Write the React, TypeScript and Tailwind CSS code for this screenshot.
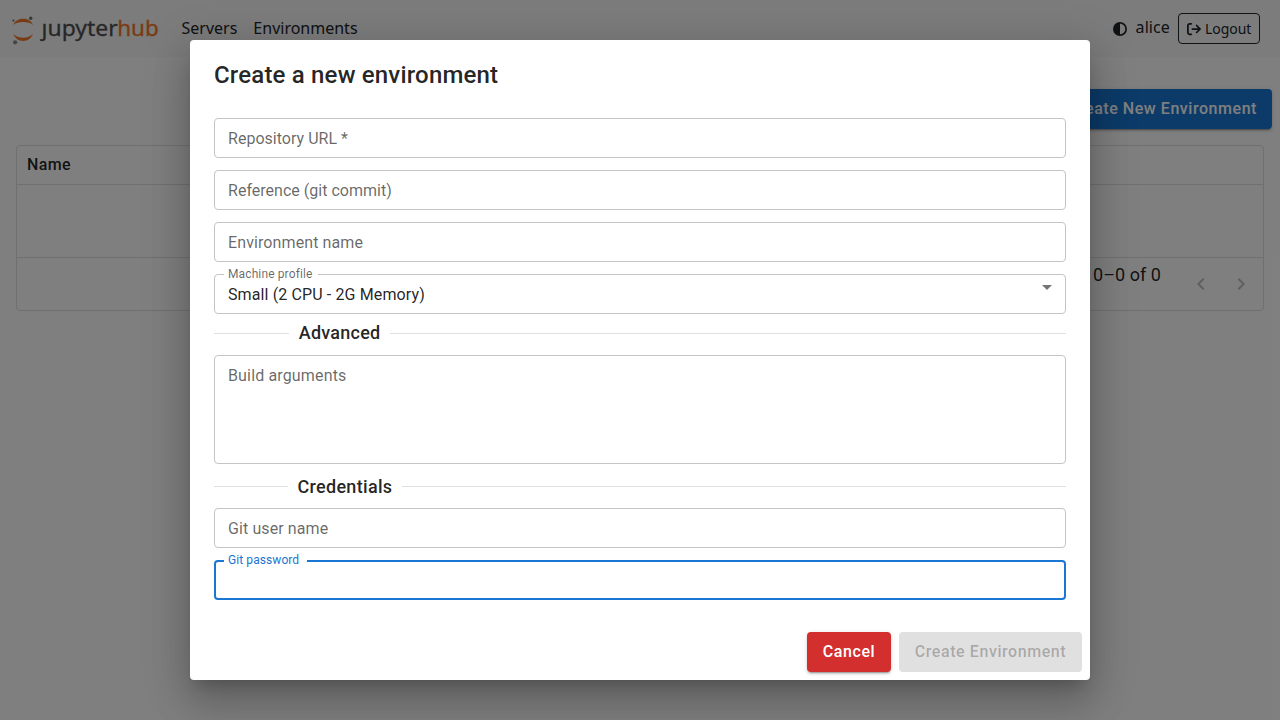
import type { ReactNode } from "react";
import { FaArrowRightFromBracket, FaCircleHalfStroke } from "react-icons/fa6";

function Logo() {
  return (
    <svg width="148" height="34" viewBox="0 0 148 34" className="block overflow-visible">
      <g transform="translate(0 .7)">
        <path d="M1.3 12.2C3.2 7.8 7 6.1 11.2 6.1s8 1.7 9.7 6.1C18.7 10.2 15.2 9.3 11.2 9.3S3.6 10.2 1.3 12.2Z" fill="#f37726" />
        <path d="M1.3 21.4c1.9 4.8 5.7 6.8 9.9 6.8s8-2 9.7-6.8c-2.2 2.4-5.7 3.6-9.7 3.6s-7.6-1.2-9.9-3.6Z" fill="#f37726" />
        <circle cx="18.7" cy="5.6" r="1.7" fill="#6f7070" />
        <circle cx="1.4" cy="7.9" r="1.1" fill="#6f7070" />
        <circle cx="3.1" cy="29.6" r="2.1" fill="#8a8a8a" />
      </g>
      <text x="29.6" y="23.9" fontSize="22.6" fontFamily="'Noto Sans', sans-serif" fill="#4e4e4e" stroke="#4e4e4e" strokeWidth="0.3" textLength="76" lengthAdjust="spacingAndGlyphs">ȷupyter</text>
      <text x="105.2" y="23.9" fontSize="22.6" fontFamily="'Noto Sans', sans-serif" fill="#f37726" stroke="#f37726" strokeWidth="0.3" textLength="41.5" lengthAdjust="spacingAndGlyphs">hub</text>
    </svg>
  );
}

function Header() {
  return (
    <header className="flex h-[57px] items-center bg-[#f8f9fa] pl-3 pr-5 font-['Noto_Sans',sans-serif] text-base text-[#212529]">
      <Logo />
      <nav className="mb-0.5 ml-[21.5px] flex gap-4">
        <a>Servers</a>
        <a>Environments</a>
      </nav>
      <div className="ml-auto flex items-center">
        <FaCircleHalfStroke className="mr-[9px] size-[14px]" />
        <span className="mb-[3px] mr-2 tracking-[0.1px]">alice</span>
        <button className="flex h-[31px] w-[82px] items-center gap-1 whitespace-nowrap rounded border border-[#212529] pl-2 text-sm tracking-[-0.05px]">
          <FaArrowRightFromBracket className="size-[14px] shrink-0" />
          Logout
        </button>
      </div>
    </header>
  );
}

function Chevron({ d }: { d: string }) {
  return (
    <svg viewBox="0 0 24 24" className="size-6 fill-black/[0.26]">
      <path d={d} />
    </svg>
  );
}

function Page() {
  return (
    <main className="flex flex-col pt-8">
      <button className="mr-2 h-10 self-end rounded bg-[#1976d2] pl-4 pr-[15px] text-base font-medium tracking-[0.55px] text-white shadow-[0_3px_1px_-2px_rgba(0,0,0,0.2),0_2px_2px_rgba(0,0,0,0.14),0_1px_5px_rgba(0,0,0,0.12)]">
        Create New Environment
      </button>
      <section className="mx-4 mt-4 flex h-[166px] flex-col rounded border border-[#e0e0e0]">
        <div className="flex h-[39px] items-center border-b border-[#e0e0e0] px-2.5 font-medium tracking-[0.4px]">Name</div>
        <div className="h-[73px] border-b border-[#e0e0e0]" />
        <div className="flex flex-1 items-center justify-end pr-2.5">
          <span className="mb-[18px] mr-7 text-lg tracking-[0.05px]">0–0 of 0</span>
          <div className="flex gap-4">
            <Chevron d="M15.41 16.59 10.83 12l4.58-4.59L14 6l-6 6 6 6z" />
            <Chevron d="M8.59 16.59 13.17 12 8.59 7.41 10 6l6 6-6 6z" />
          </div>
        </div>
      </section>
    </main>
  );
}

function Field({ label, className = "h-10 tracking-[0.1px]" }: { label: string; className?: string }) {
  return (
    <div className={`rounded border border-[#c4c4c4] px-[13px] pt-[7.5px] leading-6 text-black/60 ${className}`}>
      {label}
    </div>
  );
}

function Divider({ children, className }: { children: ReactNode; className: string }) {
  return (
    <div className={`flex h-[27px] items-center text-lg font-medium ${className}`}>
      <span className="h-px grow basis-0 bg-black/[0.12]" />
      <span className="px-[9.6px]">{children}</span>
      <span className="h-px grow-[9] basis-0 bg-black/[0.12]" />
    </div>
  );
}

function EnvironmentDialog() {
  return (
    <div className="absolute inset-0 flex items-center justify-center bg-black/50">
      <div className="flex h-[640px] w-[900px] flex-col rounded bg-white shadow-[0_11px_15px_-7px_rgba(0,0,0,0.2),0_24px_38px_3px_rgba(0,0,0,0.14),0_9px_46px_8px_rgba(0,0,0,0.12)]">
        <h2 className="px-6 pt-[15px] text-2xl leading-10 font-medium tracking-[0.18px]">Create a new environment</h2>
        <div className="mt-[23px] flex flex-col gap-3 px-6">
          <Field label="Repository URL *" className="h-10 tracking-[0.02px]" />
          <Field label="Reference (git commit)" className="h-10 tracking-[0.02px]" />
          <Field label="Environment name" />
          <div className="relative flex h-10 justify-between rounded border border-[#c4c4c4] px-[13px] pt-[7.5px] leading-6 tracking-[0.12px]">
            <span className="absolute -top-[7px] left-[9px] w-[94px] bg-white pl-1 text-xs leading-[13px] text-black/60">Machine profile</span>
            Small (2 CPU - 2G Memory)
            <svg viewBox="0 0 24 24" className="-mt-[7.5px] -mr-[7px] size-6 fill-black/[0.54]">
              <path d="m7 10 5 5 5-5z" />
            </svg>
          </div>
        </div>
        <div className="mt-[6px] flex flex-col px-6">
          <Divider className="tracking-[0.25px] [&>span:nth-child(2)]:mb-0.5">Advanced</Divider>
          <div className="mt-2 mb-[9px]">
            <Field label="Build arguments" className="h-[109px] tracking-[0.15px]" />
          </div>
          <Divider className="tracking-[0.32px]">Credentials</Divider>
        </div>
        <div className="mt-2 flex flex-col gap-3 px-6">
          <Field label="Git user name" />
          <div className="relative h-10 rounded border-2 border-[#1976d2]">
            <span className="absolute -top-2 left-2 w-[83px] bg-white pl-1 text-xs leading-[13px] tracking-[0.08px] text-[#1976d2]">Git password</span>
          </div>
        </div>
        <div className="mt-auto flex justify-end gap-2 p-2 text-base font-medium tracking-[0.57px]">
          <button className="h-10 w-[84px] rounded bg-[#d32f2f] text-white shadow-[0_3px_1px_-2px_rgba(0,0,0,0.2),0_2px_2px_rgba(0,0,0,0.14),0_1px_5px_rgba(0,0,0,0.12)]">Cancel</button>
          <button className="h-10 w-[183px] rounded bg-black/[0.12] text-black/[0.26]">Create Environment</button>
        </div>
      </div>
    </div>
  );
}

export default function App() {
  return (
    <div className="relative h-[720px] w-[1280px] overflow-hidden bg-white font-[Roboto,sans-serif] text-base text-black/[0.87]">
      <Header />
      <Page />
      <EnvironmentDialog />
    </div>
  );
}
